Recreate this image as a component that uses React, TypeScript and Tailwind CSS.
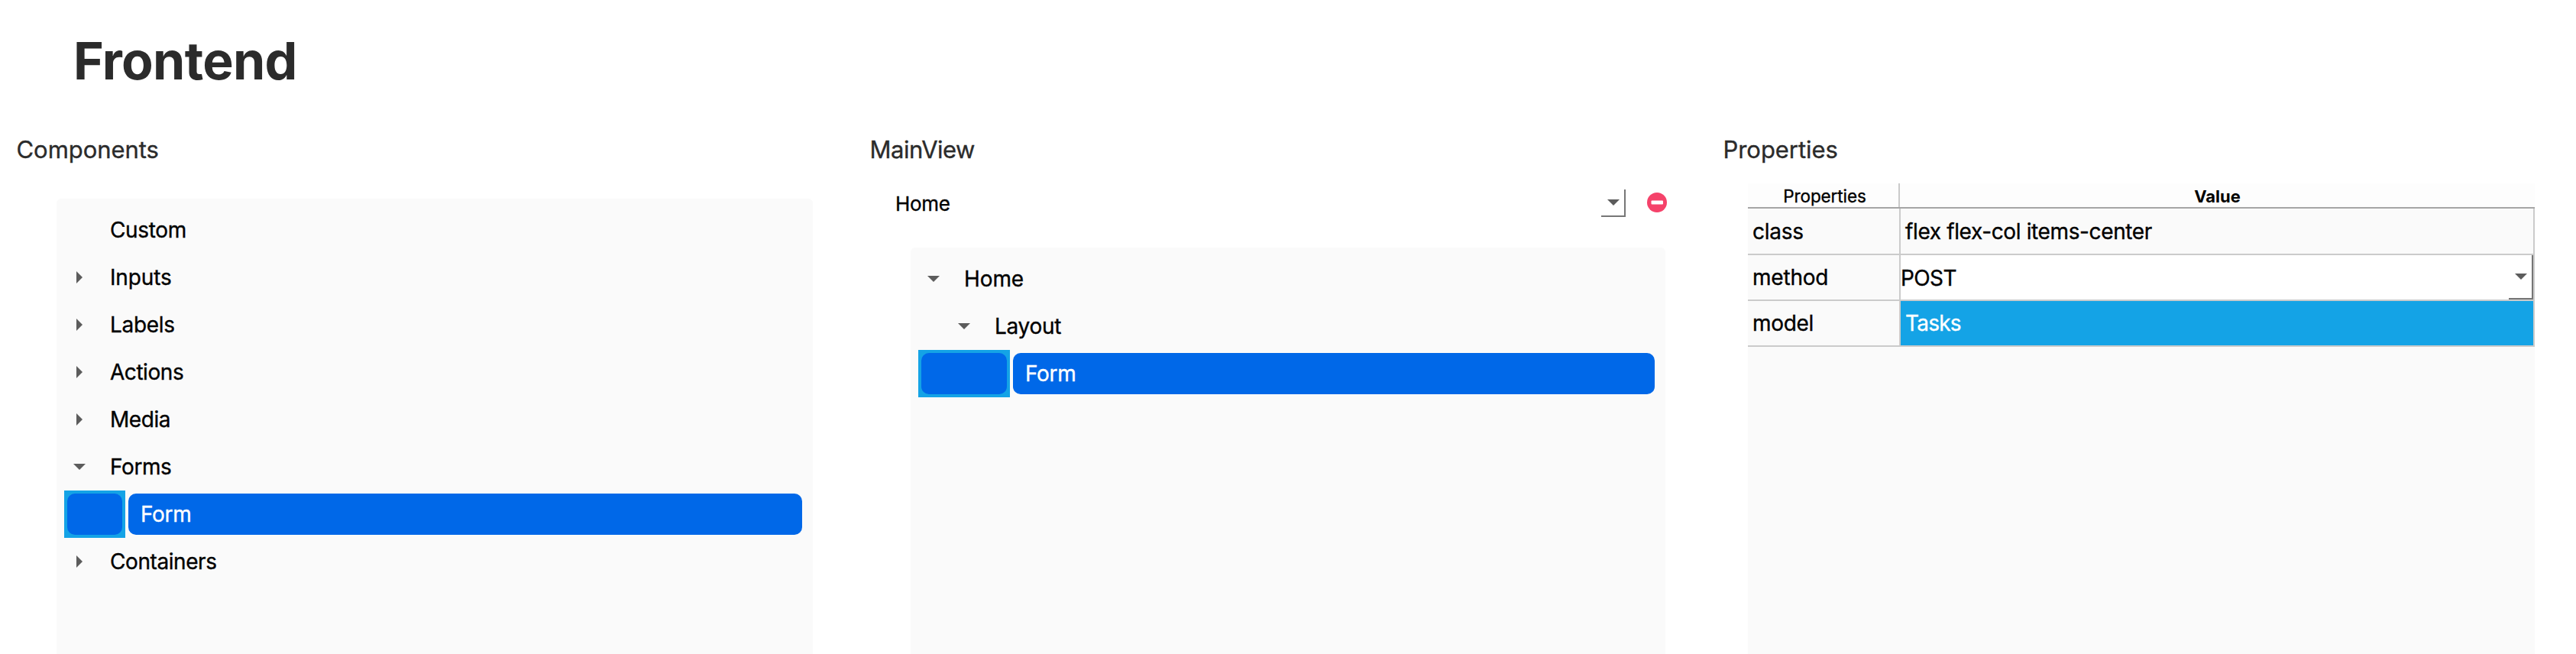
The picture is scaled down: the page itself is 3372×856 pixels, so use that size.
import React from "react";

type Arrow = "right" | "down" | "none";

type TreeItem = {
  label: string;
  arrow: Arrow;
  depth: 0 | 1 | 2;
  tracking: string;
  selected?: boolean;
};

const componentItems: TreeItem[] = [
  { label: "Custom", arrow: "none", depth: 0, tracking: "tracking-[-0.35px]" },
  { label: "Inputs", arrow: "right", depth: 0, tracking: "tracking-[-0.15px]" },
  { label: "Labels", arrow: "right", depth: 0, tracking: "tracking-[-0.3px]" },
  { label: "Actions", arrow: "right", depth: 0, tracking: "tracking-[-0.45px]" },
  { label: "Media", arrow: "right", depth: 0, tracking: "tracking-[-0.42px]" },
  { label: "Forms", arrow: "down", depth: 0, tracking: "tracking-[-0.4px]" },
  { label: "Form", arrow: "none", depth: 1, tracking: "tracking-[-0.3px]", selected: true },
  { label: "Containers", arrow: "right", depth: 0, tracking: "tracking-[-0.42px]" },
];

const viewItems: TreeItem[] = [
  { label: "Home", arrow: "down", depth: 0, tracking: "tracking-[-0.1px]" },
  { label: "Layout", arrow: "down", depth: 1, tracking: "tracking-[-0.3px]" },
  { label: "Form", arrow: "none", depth: 2, tracking: "tracking-[-0.3px]", selected: true },
];

const branchWidth = { 0: "w-10", 1: "w-20", 2: "w-[120px]" };

function DownArrow() {
  return (
    <svg width="16" height="8" viewBox="0 0 16 8" className="shrink-0">
      <path d="M0 0H16L8 8Z" fill="#5c5c5c" />
    </svg>
  );
}

function RightArrow() {
  return (
    <svg width="8" height="16" viewBox="0 0 8 16" className="shrink-0">
      <path d="M0 0L8 8L0 16Z" fill="#5c5c5c" />
    </svg>
  );
}

function TreeRow({ item }: { item: TreeItem }) {
  if (item.selected) {
    return (
      <div className="flex h-[62px]">
        <div className={`${branchWidth[item.depth]} shrink-0 bg-[#14a3e6] p-1`}>
          <div className="h-full rounded-[10px] bg-[#0068e8]" />
        </div>
        <div className="my-1 ml-1 flex flex-1 items-center rounded-[10px] bg-[#0068e8] pl-4 text-white">
          <span className={item.tracking}>{item.label}</span>
        </div>
      </div>
    );
  }
  return (
    <div className="flex h-[62px] items-center">
      <div className={`${branchWidth[item.depth]} flex shrink-0 justify-end pr-3`}>
        <div className="flex w-4 justify-center">
          {item.arrow === "down" && <DownArrow />}
          {item.arrow === "right" && <RightArrow />}
        </div>
      </div>
      <span className={`pl-5 ${item.tracking}`}>{item.label}</span>
    </div>
  );
}

function Tree({ items }: { items: TreeItem[] }) {
  return (
    <div className="flex-1 rounded-t-[6px] bg-[#fafafa] pt-[10px] pr-[14px] pl-[10px] text-[28px] leading-none text-black">
      {items.map((item) => (
        <TreeRow key={item.label} item={item} />
      ))}
    </div>
  );
}

function ColumnTitle({ children }: { children: React.ReactNode }) {
  return (
    <h2 className="flex h-[72px] items-center pb-[2px] pl-px text-[31px] leading-none tracking-[-0.05px] text-[#2b2b2b]">
      {children}
    </h2>
  );
}

export default function App() {
  return (
    <div className="flex h-[856px] w-[3372px] flex-col overflow-hidden bg-white font-[Inter,'Liberation_Sans',sans-serif] font-normal [-webkit-text-stroke:0.35px_currentColor]">
      <header className="flex h-[160px] shrink-0 items-center pb-[2px] pl-[96px] [-webkit-text-stroke:0px]">
        <h1 className="text-[68px] leading-none font-bold tracking-[-0.75px] text-[#2b2b2b]">Frontend</h1>
      </header>

      <main className="grid min-h-0 flex-1 grid-cols-[1117px_1117px_1fr] pl-[20.5px]">
        <section className="flex flex-col">
          <ColumnTitle>Components</ColumnTitle>
          <div className="mt-7 mr-[73.5px] ml-[53.5px] flex flex-1 flex-col">
            <Tree items={componentItems} />
          </div>
        </section>

        <section className="flex flex-col">
          <ColumnTitle>
            <span className="tracking-[-0.5px]">MainView</span>
          </ColumnTitle>
          <div className="mt-4 flex h-9 pl-[34.5px]">
            <div className="flex h-9 w-[956px] justify-between">
              <span className="flex items-center pt-px text-[26px] leading-none tracking-[-0.3px] text-black">
                Home
              </span>
              <div className="flex h-9 w-8 items-center justify-center border-r-2 border-b-2 border-[#767676] pl-[2px]">
                <DownArrow />
              </div>
            </div>
            <svg width="26" height="26" viewBox="0 0 26 26" className="mt-1 ml-7">
              <circle cx="13" cy="13" r="13" fill="#f5426a" />
              <rect x="5.5" y="10.5" width="15.5" height="5" rx="1" fill="#fff" />
            </svg>
          </div>
          <div className="mt-10 mr-[74.5px] ml-[54.5px] flex flex-1 flex-col">
            <Tree items={viewItems} />
          </div>
        </section>

        <section className="flex flex-col">
          <ColumnTitle>Properties</ColumnTitle>
          <div className="mt-2 mr-[54px] ml-[33.5px] flex flex-1 flex-col text-[28px] leading-none text-black">
            <div className="flex h-[33px] border-b-2 border-[#a6a6a6] bg-[#fdfdfd] text-[22px]">
              <div className="flex w-[199px] items-center justify-center border-r-2 border-[#cacaca] pt-[3px] pl-[4px] text-[22.5px] tracking-[-0.1px]">
                Properties
              </div>
              <div className="flex flex-1 items-center justify-center pt-[3px] font-bold [-webkit-text-stroke:0px]">Value</div>
            </div>
            <div className="flex-1 bg-[#fafafa]">
              <div className="flex h-[61px] border-b-2 border-[#cbcbcb]">
                <div className="flex w-[200px] items-center border-r-2 border-[#cbcbcb] pl-[6px] tracking-[-0.25px]">
                  class
                </div>
                <div className="flex flex-1 items-center border-r-2 border-[#cbcbcb] pl-[6px] tracking-[-0.37px]">
                  flex flex-col items-center
                </div>
              </div>
              <div className="flex h-[60px] border-b-2 border-[#cbcbcb]">
                <div className="flex w-[200px] items-center border-r-2 border-[#cbcbcb] pl-[6px] tracking-[-0.2px]">
                  method
                </div>
                <div className="flex flex-1 items-center justify-between border-r-2 border-[#cbcbcb] bg-white">
                  <span className="pt-px tracking-[-0.6px]">POST</span>
                  <div className="flex h-full w-8 items-center justify-center border-r-2 border-b-2 border-[#767676] pl-[2px]">
                    <DownArrow />
                  </div>
                </div>
              </div>
              <div className="flex h-[60px] border-b-2 border-[#cbcbcb]">
                <div className="flex w-[200px] items-center border-r-2 border-[#cbcbcb] pl-[6px] tracking-[-0.3px]">
                  model
                </div>
                <div className="flex flex-1 items-center border-r-2 border-[#cbcbcb] bg-[#14a3e6] pl-[6px] tracking-[-0.8px] text-white">
                  Tasks
                </div>
              </div>
            </div>
          </div>
        </section>
      </main>
    </div>
  );
}
